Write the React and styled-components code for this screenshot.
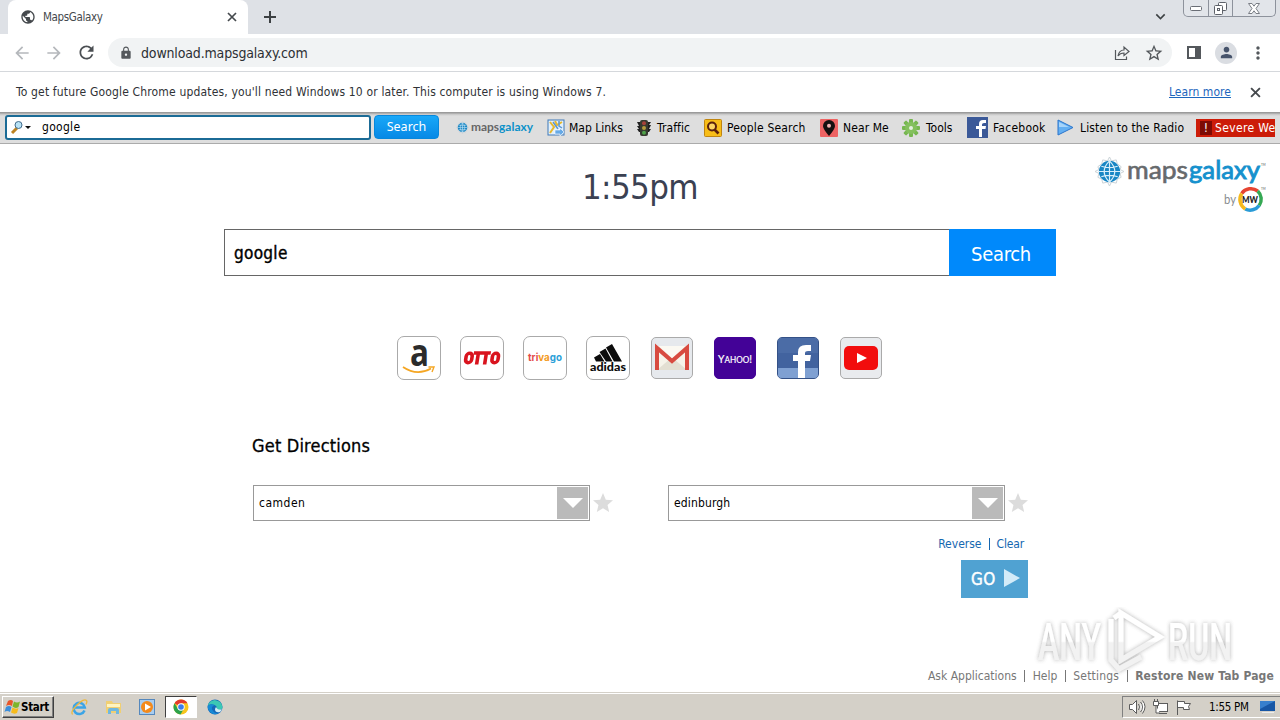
import React from 'react';
import styled, { createGlobalStyle } from 'styled-components';
import {
  MdArrowBack, MdArrowForward, MdRefresh, MdLock, MdPublic, MdStarBorder,
  MdMoreVert, MdPerson, MdExpandMore, MdStar,
} from 'react-icons/md';

const GlobalStyle = createGlobalStyle`
* { box-sizing: border-box; }
body {
  margin: 0;
  overflow: hidden;
  font-family: "DejaVu Sans Condensed", "DejaVu Sans", sans-serif;
  font-size: 12px;
  color: #000;
}
svg { display: block; flex: none; overflow: visible; }
`;

const Screen = styled.div`
width: 1280px;
height: 720px;
display: flex;
flex-direction: column;
background: #fff;
position: relative;
overflow: hidden;
`;

const Text = styled.span`
display: block;
flex: none;
white-space: pre;
letter-spacing: ${(p) => p.$ls || 0}px;
`;

// browser chrome
const TabStrip = styled.div`
height: 34px;
flex: none;
display: flex;
background: #dee1e6;
padding-left: 8px;
`;

const Tab = styled.div`
width: 240px;
height: 34px;
display: flex;
align-items: center;
padding: 0 11px 0 12px;
gap: 7px;
background: #fff;
border-radius: 8px 8px 0 0;
color: #45494d;
`;

const TabTitle = styled(Text)`
flex: 1;
font-size: 11.5px;
`;

const NewTab = styled.div`
display: flex;
align-items: center;
padding-left: 16px;
`;

const WindowArea = styled.div`
margin-left: auto;
display: flex;
padding-right: 4px;
gap: 13px;
align-items: flex-start;
color: #3c4043;
`;

const ChevronBox = styled.div`
padding-top: 7px;
`;

const WindowButtons = styled.div`
display: flex;
height: 17px;
width: 93px;
border: 1px solid #8d929c;
border-top: 0;
border-radius: 0 0 5px 5px;
background: #e2e5ea;
`;

const WindowButton = styled.div`
width: ${(p) => p.$w}px;
display: flex;
justify-content: center;
align-items: center;
border-right: ${(p) => (p.$last ? 0 : '1px solid #8d929c')};
`;

const AddressRow = styled.div`
height: 38px;
flex: none;
display: flex;
align-items: center;
border-bottom: 1px solid #d5d8dc;
padding: 0 12px;
`;

const NavButton = styled.div`
width: 32px;
display: flex;
color: ${(p) => (p.$off ? '#b5b8bc' : '#4b4f53')};
`;

const Omnibox = styled.div`
width: 1064px;
height: 29px;
border-radius: 15px;
background: #f1f3f4;
display: flex;
align-items: center;
padding: 0 8px 0 11px;
gap: 8px;
color: #54585c;
`;

const Url = styled(Text)`
flex: 1;
font-size: 14px;
color: #2c2f33;
`;

const AddressIcons = styled.div`
display: flex;
align-items: center;
padding-left: 10px;
gap: 11px;
color: #54585c;
`;

const Avatar = styled.div`
width: 22px;
height: 22px;
border-radius: 50%;
background: #dadde2;
display: flex;
justify-content: center;
align-items: center;
color: #46536b;
`;

const InfoBar = styled.div`
height: 40px;
flex: none;
display: flex;
align-items: center;
padding: 0 19px 0 16px;
color: #2f3236;
`;

const LearnMore = styled(Text)`
margin-left: auto;
margin-right: 19px;
color: #1d66bd;
text-decoration: underline;
`;

// extension toolbar
const Toolbar = styled.div`
height: 32px;
flex: none;
display: flex;
align-items: center;
background: linear-gradient(#9b9b9b 0, #9b9b9b 1px, #c4c4c4 2px, #dedede 4px, #dedede);
border-bottom: 1px solid #ababab;
padding: 0 5px;
overflow: hidden;
`;

const ToolbarInput = styled.div`
width: 366px;
height: 25px;
margin-top: -1px;
border: 2px solid #1b6b96;
border-radius: 3px;
background: #fff;
display: flex;
align-items: center;
padding-left: 4px;
gap: 10px;
`;

const ToolbarSearch = styled.div`
width: 65px;
height: 24px;
margin: -2px 17px 0 3px;
border: 1px solid #0788dc;
border-radius: 4px;
background: linear-gradient(#19a8f8, #0789e6);
color: #fff;
display: flex;
align-items: center;
justify-content: center;
font-family: "Noto Sans", sans-serif;
font-size: 12.5px;
`;

const ToolItem = styled.div`
width: ${(p) => p.$w}px;
flex: none;
display: flex;
align-items: center;
`;

const ToolIcon = styled.div`
width: ${(p) => p.$w}px;
flex: none;
`;

const Severe = styled.div`
width: 79px;
height: 18px;
background: #cc1c08;
color: #fff;
display: flex;
align-items: center;
padding-left: 4px;
gap: 3px;
`;

const Alert = styled.span`
width: 12px;
flex: none;
height: 14px;
background: #7d0b04;
text-align: center;
line-height: 14px;
`;

// page
const Page = styled.div`
height: 548px;
flex: none;
display: flex;
flex-direction: column;
`;

const Header = styled.div`
height: 85px;
display: grid;
grid-template-columns: 1fr auto 1fr;
`;

const Clock = styled(Text)`
grid-column: 2;
font-size: 34.5px;
line-height: 87px;
color: #3b4152;
`;

const Brand = styled.div`
justify-self: end;
padding: 7px 12px 0 0;
`;

const SearchRow = styled.div`
width: 832px;
height: 47px;
margin-left: 224px;
display: flex;
`;

const SearchInput = styled.div`
width: 725px;
border: 1px solid #666;
border-right: 0;
padding-left: 9px;
display: flex;
align-items: center;
font-size: 17px;
-webkit-text-stroke: 0.4px #000;
`;

const SearchButton = styled.div`
width: 107px;
background: #0089fb;
color: #fff;
display: flex;
justify-content: center;
align-items: center;
padding: 2px 3px 0 0;
font-size: 20px;
`;

const Tiles = styled.div`
display: flex;
margin: 60px 0 0 397px;
height: 44px;
gap: 19px;
align-items: center;
`;

const Tile = styled.div`
width: ${(p) => (p.$small ? 42 : 44)}px;
height: ${(p) => (p.$small ? 42 : 44)}px;
margin-left: ${(p) => (p.$small ? 2 : 0)}px;
border: 1px solid ${(p) => p.$border || '#aaa'};
border-radius: ${(p) => (p.$small ? 5 : 7)}px;
background: ${(p) => p.$bg || '#fff'};
overflow: ${(p) => (p.$clip ? 'hidden' : 'visible')};
display: flex;
align-items: center;
justify-content: center;
`;

const Directions = styled.div`
margin-left: 252px;
width: 776px;
padding-top: 54px;
`;

const Heading = styled(Text)`
font-size: 18px;
line-height: 23px;
-webkit-text-stroke: 0.3px #000;
`;

const Fields = styled.div`
display: flex;
margin: 28px 0 0 1px;
gap: 54px;
`;

const Field = styled.div`
width: 361px;
display: flex;
align-items: center;
gap: 1px;
color: #dcdcdc;
`;

const Combo = styled.div`
width: 337px;
flex: none;
height: 36px;
border: 1px solid #999;
padding: 1px 1px 1px 5px;
display: flex;
align-items: center;
justify-content: space-between;
color: #000;
`;

const Drop = styled.div`
width: 31px;
height: 32px;
background: #bababa;
display: flex;
align-items: center;
justify-content: center;
`;

const Divider = styled.div`
width: 1px;
height: 12px;
background: ${(p) => p.$color};
`;

const Links = styled.div`
display: flex;
justify-content: flex-end;
align-items: center;
gap: 7px;
padding-right: 4px;
margin-top: 14px;
height: 18px;
line-height: 18px;
color: #1567b0;
`;

const Go = styled.div`
width: 67px;
height: 38px;
margin: 7px 0 0 auto;
background: #50a2d2;
color: #fff;
display: flex;
align-items: center;
padding-left: 10px;
gap: 8px;
font-size: 17px;
-webkit-text-stroke: 0.4px #fff;
`;

const Footer = styled.div`
margin-top: auto;
height: 32px;
display: flex;
justify-content: flex-end;
align-items: center;
gap: 7.5px;
padding-right: 6px;
color: #777;
`;

const Bold = styled(Text)`
font-weight: bold;
`;

const Watermark = styled.div`
position: absolute;
left: 1030px;
top: 603px;
pointer-events: none;
`;

// windows taskbar
const Taskbar = styled.div`
height: 28px;
flex: none;
display: flex;
align-items: center;
background: #d4d0c8;
border-top: 1px solid #d4d0c8;
box-shadow: inset 0 1px 0 #fff;
padding: 3px 0 2px 2px;
`;

const Start = styled.div`
width: 52px;
height: 22px;
display: flex;
align-items: center;
padding-left: 1px;
font-weight: bold;
border: 1px solid;
border-color: #fff #404040 #404040 #fff;
box-shadow: inset -1px -1px 0 #808080;
font-size: 11.5px;
`;

const Launchers = styled.div`
display: flex;
margin-left: 8px;
`;

const Launcher = styled.div`
width: 34px;
height: 22px;
display: flex;
align-items: center;
justify-content: center;
`;

const ActiveLauncher = styled(Launcher)`
width: 32px;
margin: 0 1px;
background: #fff;
border: 1px solid;
border-color: #404040 #fff #fff #404040;
`;

const Tray = styled.div`
width: 158px;
height: 22px;
margin-left: auto;
display: flex;
align-items: center;
padding-left: 5px;
border: 1px solid;
border-color: #808080 #fff #fff #808080;
border-right: 0;
`;

const TrayTime = styled(Text)`
width: 50px;
font-size: 11.5px;
margin-left: 13px;
`;

const Cross = ({ size }) => (
  <svg width={size} height={size} viewBox="0 0 10 10">
    <path d="M1 1l8 8M9 1l-8 8" stroke="#45494d" strokeWidth="1.700" />
  </svg>
);

const Plus = () => (
  <svg width="12" height="12">
    <path d="M6 0v12M0 6h12" stroke="#3c4043" strokeWidth="2" />
  </svg>
);

const Globe = ({ size }) => (
  <svg width={size} height={size} viewBox="0 0 30 30">
    <path d="M15 0l2 4 5-1 1 4 4 3-1 3 4 2-4 2 1 4-4 2-1 4-5-1-2 4-2-4-5 1-1-4-4-2 1-4-4-2 4-2-1-3 4-3 1-4 5 1z" fill="none" stroke="#c9d1d7" />
    <circle cx="15" cy="15" r="11" fill="#1886c4" />
    <path d="M4 15h22M15 4v22M6.500 9.500q8 3 17 0M6.500 20.500q8-3 17 0M15 4q-11 11 0 22M15 4q11 11 0 22" fill="none" stroke="#d8eefa" strokeWidth="1.200" />
  </svg>
);

const MapIcon = () => (
  <svg width="18" height="18" viewBox="0 0 18 18">
    <rect x="1" y="1" width="16" height="15" fill="#e3f0fb" stroke="#3f78b8" />
    <path d="M3 3l4 5-4 6M8 2l2 4 5-3" fill="none" stroke="#e6b82e" strokeWidth="2" />
    <path d="M6 3l5 7M12 2v5l3 2" fill="none" stroke="#5b98d4" strokeWidth="1.5" />
    <path d="M8 11h5V9l4 4-4 4v-2H8z" fill="#66a9e6" stroke="#fff" strokeWidth=".6" />
  </svg>
);

const TrafficIcon = () => (
  <svg width="14" height="16" viewBox="0 0 14 16">
    <path d="M0 2h14l-2 3h2l-2 4h2l-2 3H2L0 9h2L0 6h2z" fill="#202020" />
    <rect x="3" y="0" width="8" height="16" rx="2" fill="#373a30" />
    <circle cx="7" cy="3.3" r="2" fill="#a5423a" />
    <circle cx="7" cy="8" r="2" fill="#b49b3c" />
    <circle cx="7" cy="12.7" r="2" fill="#4fa249" />
  </svg>
);

const PeopleIcon = () => (
  <svg width="18" height="18" viewBox="0 0 18 18">
    <rect x=".5" y=".5" width="17" height="17" rx="1" fill="#f8bd17" stroke="#bf8511" />
    <circle cx="8" cy="7.500" r="4" fill="#fbd464" stroke="#5a200c" strokeWidth="2" />
    <path d="M10.500 10.500l4 4" stroke="#5a200c" strokeWidth="2.600" />
  </svg>
);

const NearIcon = () => (
  <svg width="18" height="18" viewBox="0 0 18 18">
    <rect width="18" height="18" rx="1" fill="#ee6464" />
    <path d="M9 17Q3 10 3 7a6 6 0 0 1 12 0q0 3-6 10z" fill="#151010" />
    <circle cx="9" cy="6.700" r="2" fill="#f2b2b2" />
  </svg>
);

const GearIcon = () => (
  <svg width="18" height="18" viewBox="0 0 18 18">
    {[0, 45, 90, 135].map((a) => (
      <rect key={a} x="7" y="0" width="4" height="18" rx="1" fill="#77b751" transform={`rotate(${a} 9 9)`} />
    ))}
    <circle cx="9" cy="9" r="6" fill="#84c05e" />
    <circle cx="9" cy="9" r="2" fill="#e5efdf" />
  </svg>
);

const FbIcon = () => (
  <svg width="21" height="21" viewBox="0 0 21 21">
    <rect width="21" height="21" fill="#3b5998" />
    <path d="M12 20v-8H9V9h3V7q0-4 4-4h3v3h-2q-2 0-2 1.500V9h4l-.5 3H15v8z" fill="#fff" />
  </svg>
);

const PlayIcon = () => (
  <svg width="17" height="17" viewBox="0 0 17 17">
    <path d="M1 1l15 7.500L1 16z" fill="#63aff2" stroke="#2a75cc" />
    <path d="M2 3l10 5H2z" fill="#a6d4fa" />
  </svg>
);

const links = [
  { text: 'Map Links', w: 90, iw: 22, ls: 0, icon: <MapIcon /> },
  { text: 'Traffic', w: 67, iw: 20, ls: 0.1, icon: <TrafficIcon /> },
  { text: 'People Search', w: 116, iw: 23, ls: 0.17, icon: <PeopleIcon /> },
  { text: 'Near Me', w: 82, iw: 23, ls: 0.1, icon: <NearIcon /> },
  { text: 'Tools', w: 65, iw: 24, ls: 0, icon: <GearIcon /> },
  { text: 'Facebook', w: 90, iw: 26, ls: 0.25, icon: <FbIcon /> },
  { text: 'Listen to the Radio', w: 139, iw: 23, ls: 0.14, icon: <PlayIcon /> },
];

const SmallLogo = () => (
  <svg width="78" height="16" viewBox="0 0 78 16">
    <svg y="1"><Globe size={13} /></svg>
    <text x="15" y="11" fontFamily="Lato, sans-serif" fontWeight="700" fontSize="12" fill="#666" textLength="62" lengthAdjust="spacingAndGlyphs">
      maps<tspan fill="#0b91c9">galaxy</tspan>
    </text>
  </svg>
);

const BrandLogo = () => (
  <svg width="175" height="66" viewBox="0 0 175 66">
    <svg x="2" y="6"><Globe size={29} /></svg>
    <g fontFamily="Lato, sans-serif" fontSize="25">
      <text x="34" y="28" fill="#66696c" stroke="#66696c" strokeWidth=".6" textLength="61" lengthAdjust="spacingAndGlyphs">maps</text>
      <text x="96" y="28" fill="#1591cd" stroke="#1591cd" strokeWidth=".9" textLength="71" lengthAdjust="spacingAndGlyphs">galaxy</text>
      <text x="168" y="15" fontSize="3" fill="#555">TM</text>
      <text x="131" y="53" fontSize="13" fill="#8a8d90" textLength="12" lengthAdjust="spacingAndGlyphs">by</text>
      <text x="168" y="39" fontSize="3" fill="#555">TM</text>
    </g>
    <g fill="none" strokeWidth="3.500" transform="translate(1.200 .5)">
      <path d="M147.500 42A11.200 11.200 0 0 1 163.500 39.500" stroke="#e64432" />
      <path d="M163.500 39.500A11.200 11.200 0 0 1 165 54" stroke="#35a853" />
      <path d="M165 54A11.200 11.200 0 0 1 151 57.500" stroke="#2a9bd7" />
      <path d="M151 57.500A11.200 11.200 0 0 1 147.500 42" stroke="#f5b91d" />
    </g>
    <text x="157" y="52" fontFamily="Lato, sans-serif" fontWeight="900" fontSize="9.500" textAnchor="middle" fill="#222" textLength="16" lengthAdjust="spacingAndGlyphs">MW</text>
  </svg>
);

const AmazonLogo = () => (
  <svg width="34" height="36" viewBox="0 0 34 36">
    <text x="8" y="26" fontFamily="'Open Sans', sans-serif" fontWeight="700" fontSize="37" textLength="19" lengthAdjust="spacingAndGlyphs" fill="#2b2b2b">a</text>
    <path d="M1 27q14 9.500 28 1.500" fill="none" stroke="#f5a623" strokeWidth="1.800" />
    <path d="M26.500 27h5.500l-2 5" fill="none" stroke="#f5a623" strokeWidth="1.400" />
  </svg>
);

const OttoLogo = () => (
  <svg width="38" height="20" viewBox="0 0 38 20">
    <g fill="none" stroke="#d9131e" strokeWidth="3.600" transform="translate(2.600 0) skewX(-9)">
      <rect x="1.900" y="5.300" width="6" height="9.400" rx="3" />
      <path d="M9 5h17M13.600 5v11.500M21.600 5v11.500" />
      <rect x="28.200" y="5.300" width="6" height="9.400" rx="3" />
    </g>
  </svg>
);

const TrivagoLogo = () => (
  <svg width="36" height="18" viewBox="0 0 36 18">
    <text x="1" y="12" fontFamily="Inter, sans-serif" fontWeight="700" fontSize="10" textLength="34" lengthAdjust="spacingAndGlyphs">
      <tspan fill="#e44b4b">tri</tspan><tspan fill="#f39a21">va</tspan><tspan fill="#2b9fd8">go</tspan>
    </text>
  </svg>
);

const AdidasLogo = () => (
  <svg width="38" height="30" viewBox="0 0 38 30">
    <g fill="#0c0c0c">
      <path d="M17 4.500l6-3.500 10 17.500h-8zM10.500 9l6-3.500 7 13h-6.500zM5 14.500l6-3.500 4.500 7.500H7z" />
      <text x="1" y="27.500" fontFamily="Lato, sans-serif" fontWeight="900" fontSize="12" textLength="36" lengthAdjust="spacingAndGlyphs">adidas</text>
    </g>
  </svg>
);

const GmailLogo = () => (
  <svg width="36" height="26" viewBox="0 0 36 26">
    <rect x="1" y="1" width="34" height="24" rx="2" fill="#f6f3e9" />
    <path d="M3 25l13-11h4l13 11z" fill="#e3dfd2" />
    <path d="M5 1h26L18 13z" fill="#fbf9f2" />
    <path d="M3 25V3l15 13L33 3v22" fill="none" stroke="#d84b40" strokeWidth="4" />
  </svg>
);

const FacebookTile = () => (
  <svg width="40" height="40" viewBox="0 0 40 40">
    <rect width="40" height="40" fill="#42639f" />
    <rect width="40" height="15" fill="#4b6ca6" />
    <rect y="30" width="40" height="10" fill="#7fa0d2" />
    <path d="M20 40V23h-5v-6h5v-3q0-7 8-7h5v6h-3q-3 0-3 2v2h6l-1 6h-5v17z" fill="#fff" />
  </svg>
);

const YoutubeLogo = () => (
  <svg width="34" height="26" viewBox="0 0 34 26">
    <rect y="1" width="34" height="24" rx="5" fill="#f20d0d" />
    <path d="M13 8l10 5-10 5z" fill="#fff" />
  </svg>
);

const YahooLogo = () => (
  <svg width="36" height="14" viewBox="0 0 36 14">
    <text x="1" y="11.500" fill="#fff" fontFamily="Lato, sans-serif" fontSize="12" stroke="#fff" strokeWidth=".2" textLength="34" lengthAdjust="spacingAndGlyphs">
      Y<tspan fontSize="9.500">AHOO</tspan>!
    </text>
  </svg>
);

const Flag = () => (
  <svg width="17" height="16" viewBox="0 0 17 16">
    <path d="M4 2q3-2 5 0L8 7Q5 5 2 7z" fill="#e8562a" />
    <path d="M10 2.500q3 2 6 0L14.500 8q-3 2-6-.5z" fill="#7db52c" />
    <path d="M2 8q3-2 5.500 0L6 13q-3-2-5.500 0z" fill="#3b8edb" />
    <path d="M8.500 8.500q3 2 6 .5L13 14q-3 1.500-6-.5z" fill="#f7bb1c" />
  </svg>
);

const IeIcon = () => (
  <svg width="18" height="18" viewBox="0 0 18 18">
    <path d="M14.500 12.500A5.600 5.600 0 1 1 14.800 9.500H5" fill="none" stroke="#3ba4e6" strokeWidth="2.500" />
    <path d="M2.500 16.500Q0 14 7 7t9.500-4.500q1 .8-.5 4" fill="none" stroke="#edb83e" strokeWidth="1.300" />
  </svg>
);

const FolderIcon = () => (
  <svg width="17" height="16" viewBox="0 0 17 16">
    <path d="M1 2h6l1 2h8v10H1z" fill="#f0cf73" />
    <path d="M2 5h13v3H2z" fill="#fff4c0" />
    <path d="M3 15v-4q0-2 2-2h7q2 0 2 2v4h-3v-3H6v3z" fill="#70b7df" />
  </svg>
);

const MediaIcon = () => (
  <svg width="16" height="16" viewBox="0 0 16 16">
    <rect x=".5" y=".5" width="15" height="15" fill="#a8cdf0" stroke="#5588bd" />
    <circle cx="8" cy="8" r="6" fill="#f38a1c" />
    <path d="M6 4.500l6 3.500-6 3.500z" fill="#fff" />
  </svg>
);

const ChromeIcon = () => (
  <svg width="16" height="16" viewBox="0 0 16 16">
    <circle cx="8" cy="8" r="7.500" fill="#f7c51d" />
    <path d="M8 8L1.500 4.200A7.500 7.500 0 0 1 14.500 4.200H8z" fill="#e33b2e" />
    <path d="M1.500 4.200A7.500 7.500 0 0 0 7.500 15.500L11 9.500 4.700 9.500z" fill="#2ba24c" />
    <circle cx="8" cy="8" r="3.700" fill="#fff" />
    <circle cx="8" cy="8" r="2.800" fill="#3b7ded" />
  </svg>
);

const EdgeIcon = () => (
  <svg width="16" height="16" viewBox="0 0 16 16">
    <circle cx="8" cy="8" r="7.500" fill="#1668b8" />
    <path d="M.7 7A7.500 7.500 0 0 1 15.500 8q0 3-4 3-2 0-2-1 1-3-2-4Q3 4 .7 7z" fill="#3cc8b4" />
    <path d="M.7 7Q4 4 7.500 6 3 8 6 12q2 3 6 2Q7 17 3 13 .3 10 .7 7z" fill="#168ad6" />
    <path d="M9 8q1 3 6 2.500L13 13q-5 1-5-3z" fill="#d4edf6" />
  </svg>
);

function App() {
  return (
    <>
      <GlobalStyle />
      <Screen>
        <TabStrip>
          <Tab>
            <MdPublic size={16} />
            <TabTitle $ls={-0.35}>MapsGalaxy</TabTitle>
            <Cross size={10} />
          </Tab>
          <NewTab><Plus /></NewTab>
          <WindowArea>
            <ChevronBox><MdExpandMore size={19} /></ChevronBox>
            <WindowButtons>
              <WindowButton $w={25}>
                <svg width="12" height="6"><rect x=".5" y="1.500" width="11" height="4" rx="1" fill="#fff" stroke="#6a6e76" /></svg>
              </WindowButton>
              <WindowButton $w={25}>
                <svg width="13" height="13" fill="#fff" stroke="#5d6169">
                  <rect x="4.500" y=".5" width="8" height="8" rx="1" />
                  <rect x=".5" y="3.500" width="8" height="9" rx="1" />
                  <rect x="3.500" y="6.500" width="2" height="2" />
                </svg>
              </WindowButton>
              <WindowButton $w={42} $last>
                <svg width="12" height="11" fill="#fff" stroke="#7a7e86">
                  <path d="M.5.5h3.500l2 2.700 2-2.700h3.500L8 5.500l3.500 5H8L6 7.800l-2 2.700H.5L4 5.500z" />
                </svg>
              </WindowButton>
            </WindowButtons>
          </WindowArea>
        </TabStrip>
        <AddressRow>
          <NavButton $off><MdArrowBack size={20} /></NavButton>
          <NavButton $off><MdArrowForward size={20} /></NavButton>
          <NavButton><MdRefresh size={21} /></NavButton>
          <Omnibox>
            <MdLock size={14} />
            <Url $ls={-0.16}>download.mapsgalaxy.com</Url>
            <svg width="16" height="16" fill="none" stroke="#54585c" strokeWidth="1.200">
              <path d="M3.500 5v9.500h11v-3M6 11q1-6 6-6V2l5 4.500-5 4V8Q8 8 6 11z" />
            </svg>
            <span />
            <MdStarBorder size={20} />
          </Omnibox>
          <AddressIcons>
            <svg width="22" height="16">
              <rect x="6" y="2" width="12" height="11" fill="none" stroke="#54585c" strokeWidth="2" />
              <rect x="13" y="2" width="5" height="11" fill="#54585c" />
            </svg>
            <Avatar><MdPerson size={17} /></Avatar>
            <MdMoreVert size={20} />
          </AddressIcons>
        </AddressRow>
        <InfoBar>
          <Text $ls={0.16}>To get future Google Chrome updates, you'll need Windows 10 or later. This computer is using Windows 7.</Text>
          <LearnMore $ls={0.05}>Learn more</LearnMore>
          <Cross size={11} />
        </InfoBar>
        <Toolbar>
          <ToolbarInput>
            <svg width="21" height="14">
              <path d="M1 13l5-5" stroke="#bd8321" strokeWidth="3" />
              <circle cx="7.500" cy="5" r="3.500" fill="#b9e3f6" stroke="#416b8c" />
              <path d="M14 6h6l-3 3z" fill="#111" />
            </svg>
            <Text $ls={0.3}>google</Text>
          </ToolbarInput>
          <ToolbarSearch><Text>Search</Text></ToolbarSearch>
          <ToolItem $w={91}><SmallLogo /></ToolItem>
          {links.map((l) => (
            <ToolItem key={l.text} $w={l.w}>
              <ToolIcon $w={l.iw}>{l.icon}</ToolIcon>
              <Text $ls={l.ls}>{l.text}</Text>
            </ToolItem>
          ))}
          <Severe><Alert>!</Alert><Text $ls={0.35}>Severe We</Text></Severe>
        </Toolbar>
        <Page>
          <Header>
            <Clock $ls={-0.6}>1:55pm</Clock>
            <Brand><BrandLogo /></Brand>
          </Header>
          <SearchRow>
            <SearchInput><Text $ls={0.3}>google</Text></SearchInput>
            <SearchButton><Text $ls={-0.3}>Search</Text></SearchButton>
          </SearchRow>
          <Tiles>
            <Tile><AmazonLogo /></Tile>
            <Tile><OttoLogo /></Tile>
            <Tile><TrivagoLogo /></Tile>
            <Tile><AdidasLogo /></Tile>
            <Tile $small $bg="#e6e9ed"><GmailLogo /></Tile>
            <Tile $small $bg="#430297" $border="#430297"><YahooLogo /></Tile>
            <Tile $small $clip $border="#345187"><FacebookTile /></Tile>
            <Tile $small $bg="#e9ebee"><YoutubeLogo /></Tile>
          </Tiles>
          <Directions>
            <Heading $ls={0.18}>Get Directions</Heading>
            <Fields>
              {[['camden', 0.5], ['edinburgh', 0.15]].map(([place, ls]) => (
                <Field key={place}>
                  <Combo>
                    <Text $ls={ls}>{place}</Text>
                    <Drop><svg width="20" height="10"><path d="M0 0h20L10 10z" fill="#fff" /></svg></Drop>
                  </Combo>
                  <MdStar size={24} />
                </Field>
              ))}
            </Fields>
            <Links>
              <Text>Reverse</Text>
              <Divider $color="#1567b0" />
              <Text $ls={-0.15}>Clear</Text>
            </Links>
            <Go>
              <Text $ls={0.3}>GO</Text>
              <svg width="16" height="20"><path d="M0 0l16 9-16 9z" fill="#d3ebf8" /></svg>
            </Go>
          </Directions>
          <Footer>
            <Text>Ask Applications</Text><Divider $color="#777" />
            <Text>Help</Text><Divider $color="#777" />
            <Text $ls={0.2}>Settings</Text><Divider $color="#777" />
            <Bold $ls={0.16}>Restore New Tab Page</Bold>
          </Footer>
        </Page>
        <Taskbar>
          <Start><Flag /><Text $ls={-0.3}>Start</Text></Start>
          <Launchers>
            <Launcher><IeIcon /></Launcher>
            <Launcher><FolderIcon /></Launcher>
            <Launcher><MediaIcon /></Launcher>
            <ActiveLauncher><ChromeIcon /></ActiveLauncher>
            <Launcher><EdgeIcon /></Launcher>
          </Launchers>
          <Tray>
            <svg width="68" height="16" fill="#fff" stroke="#5c5c5c">
              <path d="M1.500 5.500h3l4-4v13l-4-4h-3zM10.500 5q2 3 0 6M12.500 3q4 5 0 10M14.500 1.500q5 6 0 13" />
              <rect x="29.500" y="4.500" width="10" height="8" />
              <path d="M31 14.500h8M25.500 2.500h5v4h-5zM28 7v7h4M26.500 2V0M29.500 2V0" />
              <path d="M49.500 16V1.500M49.500 2.500h7v2h6l-2 3 1 3h-6v-2h-6z" />
            </svg>
            <TrayTime $ls={-0.3}>1:55 PM</TrayTime>
            <svg width="17" height="14">
              <rect x="1" y="1" width="15" height="10" fill="#1756a5" />
              <path d="M1 1h15L1 9z" fill="#377fcd" />
              <path d="M3 12.500h12" stroke="#ececec" />
            </svg>
          </Tray>
        </Taskbar>
        <Watermark>
          <svg width="210" height="76" viewBox="0 0 210 76">
            <defs>
              <filter id="soft" x="-10%" y="-10%" width="120%" height="120%">
                <feDropShadow dx="0" dy="0" stdDeviation="2" floodColor="#666" floodOpacity=".65" />
              </filter>
              <linearGradient id="shade" gradientUnits="userSpaceOnUse" x1="0" y1="20" x2="0" y2="58">
                <stop offset=".48" stopColor="#fff" />
                <stop offset=".52" stopColor="#f0f0f0" />
              </linearGradient>
            </defs>
            <g filter="url(#soft)" fill="url(#shade)" opacity=".8">
              <g fontFamily="Roboto, sans-serif" fontWeight="500" fontSize="51">
                <text x="8" y="57" textLength="63" lengthAdjust="spacingAndGlyphs">ANY</text>
                <text x="138" y="57" textLength="64" lengthAdjust="spacingAndGlyphs">RUN</text>
              </g>
              <path d="M91 10v47l39-23zM81 16v41l8 9 22-12M91 10l-7 5" fill="none" stroke="url(#shade)" strokeWidth="5" />
            </g>
          </svg>
        </Watermark>
      </Screen>
    </>
  );
}

export default App;
